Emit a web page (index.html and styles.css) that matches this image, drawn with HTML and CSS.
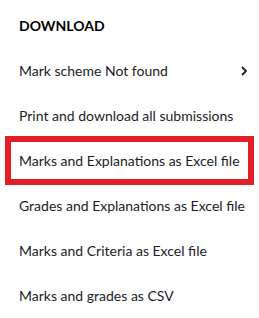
FILE: index.html
```html
<!DOCTYPE html>
<html lang="en">
<head>
  <meta charset="UTF-8">
  <title>Download</title>
  <link rel="stylesheet" href="styles.css">
</head>
<body>
  <div class="download-menu">
    <h3 class="menu-title">DOWNLOAD</h3>
    <ul class="menu-list">
      <li class="menu-item">
        <span>Mark scheme Not found</span>
        <svg class="chevron" width="6" height="10" viewBox="0 0 6 10">
          <polyline points="1,1 5,5 1,9" fill="none" stroke="#1c1c28" stroke-width="1.8"/>
        </svg>
      </li>
      <li class="menu-item">Print and download all submissions</li>
      <li class="menu-item highlighted">Marks and Explanations as Excel file</li>
      <li class="menu-item">Grades and Explanations as Excel file</li>
      <li class="menu-item">Marks and Criteria as Excel file</li>
      <li class="menu-item">Marks and grades as CSV</li>
    </ul>
  </div>
</body>
</html>
```

FILE: styles.css
```css
body {
  margin: 0;
  background: #fff;
  font-family: Lato, "Open Sans", sans-serif;
  color: #1c1c28;
}

.download-menu {
  padding-top: 17px;
}

.menu-title {
  margin: 0 0 14px;
  padding-left: 19px;
  font-size: 14px;
  line-height: 17px;
  font-weight: 700;
  color: #000;
}

.menu-list {
  list-style: none;
  margin: 0;
  padding: 0;
}

.menu-item {
  height: 45px;
  display: flex;
  align-items: center;
  justify-content: space-between;
  padding: 0 12px 0 19px;
  font-size: 14px;
  line-height: 17px;
  position: relative;
}

/* marco rojo de resaltado */
.highlighted::after {
  content: '';
  position: absolute;
  top: -2px;
  bottom: -2px;
  left: 5px;
  right: 5px;
  border: 6px solid #e31e24;
}
```
